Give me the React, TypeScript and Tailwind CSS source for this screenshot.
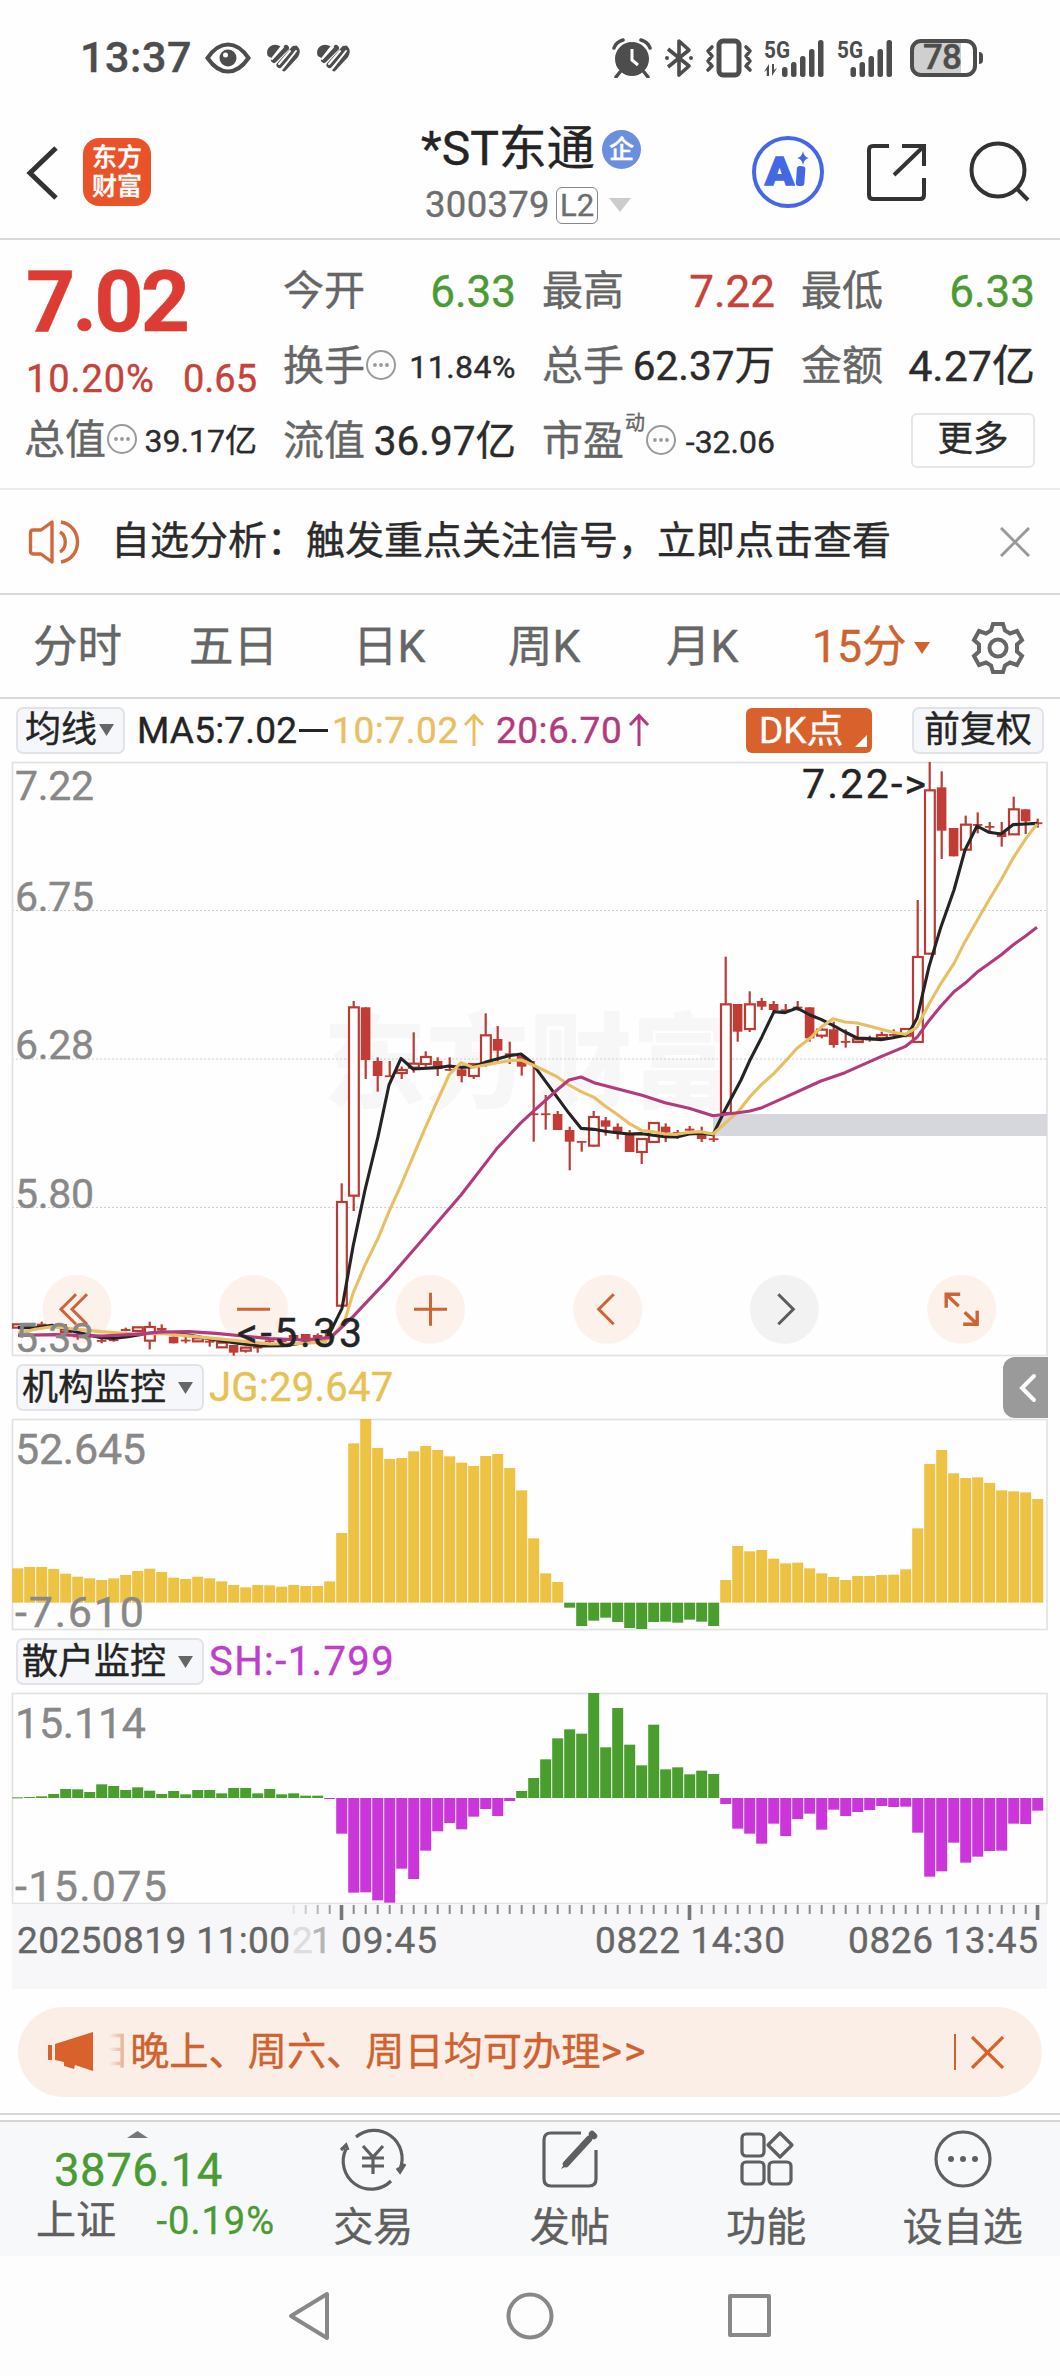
import React from "react";

const PITCH = 12;
const FIRST = 5.7; // centre of the first bar, measured from the panel's left edge
const cx = (i: number) => FIRST + PITCH * i;

/* Candles: index, high, body top, body bottom, low (thirds of a pixel), kind: h = hollow, f = filled */
type Candle = [number, number, number, number, number, "h" | "f"];
const candles: Candle[] = [
  [0, 1723, 1723, 1733, 1733, "h"], [1, 1726, 1726, 1732, 1732, "f"], [2, 1715, 1721, 1728, 1734, "f"],
  [3, 1722, 1726, 1730, 1736, "f"], [4, 1722, 1738, 1746, 1756, "h"], [5, 1745, 1756, 1762, 1769, "f"],
  [6, 1750, 1756, 1762, 1765, "f"], [7, 1760, 1770, 1775, 1780, "f"], [8, 1766, 1768, 1773, 1775, "f"],
  [9, 1733, 1737, 1743, 1744, "f"], [10, 1732, 1732, 1743, 1743, "h"], [11, 1715, 1731, 1772, 1798, "h"],
  [12, 1723, 1734, 1742, 1747, "f"], [13, 1760, 1760, 1780, 1780, "f"], [14, 1760, 1769, 1774, 1780, "f"],
  [15, 1762, 1765, 1774, 1776, "h"], [16, 1766, 1772, 1778, 1790, "f"], [17, 1775, 1778, 1792, 1792, "h"],
  [18, 1785, 1785, 1808, 1817, "f"], [19, 1790, 1793, 1802, 1808, "h"], [20, 1780, 1790, 1794, 1808, "f"],
  [21, 1765, 1771, 1775, 1780, "f"], [22, 1765, 1771, 1775, 1778, "f"], [23, 1755, 1755, 1770, 1775, "f"],
  [24, 1752, 1752, 1768, 1772, "f"], [25, 1750, 1755, 1768, 1772, "f"], [26, 1745, 1750, 1765, 1768, "f"],
  [27, 1300, 1356, 1667, 1667, "h"], [28, 753, 772, 1337, 1383, "h"], [29, 772, 772, 930, 987, "f"],
  [30, 922, 933, 978, 1025, "f"], [31, 933, 976, 980, 980, "f"], [32, 950, 960, 969, 987, "h"],
  [33, 847, 941, 953, 968, "h"], [34, 904, 921, 942, 950, "h"], [35, 922, 933, 957, 978, "f"],
  [36, 922, 957, 961, 963, "f"], [37, 955, 958, 978, 997, "f"], [38, 940, 942, 978, 987, "h"],
  [39, 790, 856, 939, 950, "h"], [40, 828, 867, 902, 935, "f"], [41, 875, 910, 915, 942, "f"],
  [42, 912, 918, 950, 977, "f"], [43, 933, 1090, 1094, 1175, "f"], [44, 1035, 1090, 1094, 1139, "f"],
  [45, 1083, 1092, 1140, 1140, "f"], [46, 1130, 1140, 1175, 1261, "f"], [47, 1175, 1173, 1178, 1205, "f"],
  [48, 1083, 1101, 1187, 1190, "h"], [49, 1101, 1111, 1130, 1157, "f"], [50, 1120, 1130, 1151, 1168, "f"],
  [51, 1140, 1152, 1206, 1206, "f"], [52, 1165, 1167, 1206, 1242, "h"], [53, 1119, 1119, 1176, 1176, "h"],
  [54, 1120, 1130, 1148, 1176, "f"], [55, 1140, 1146, 1150, 1166, "f"], [56, 1128, 1136, 1142, 1155, "f"],
  [57, 1130, 1155, 1167, 1176, "f"], [58, 1155, 1165, 1169, 1176, "f"], [59, 620, 763, 1089, 1089, "h"],
  [60, 762, 762, 845, 875, "f"], [61, 724, 763, 837, 846, "h"], [62, 744, 753, 770, 780, "f"],
  [63, 753, 762, 780, 786, "f"], [64, 762, 778, 783, 787, "f"], [65, 753, 770, 775, 782, "f"],
  [66, 772, 772, 865, 875, "f"], [67, 830, 839, 857, 865, "h"], [68, 815, 838, 885, 893, "f"],
  [69, 838, 873, 877, 893, "f"], [70, 828, 868, 876, 877, "h"], [71, 857, 866, 870, 875, "f"],
  [72, 845, 855, 864, 865, "h"], [73, 838, 852, 857, 862, "f"], [74, 836, 837, 857, 862, "h"],
  [75, 450, 621, 876, 876, "h"], [76, 36, 121, 611, 611, "h"], [77, 64, 112, 242, 327, "f"],
  [78, 234, 234, 319, 319, "f"], [79, 197, 224, 299, 300, "h"], [80, 187, 222, 227, 250, "f"],
  [81, 216, 228, 232, 245, "f"], [82, 216, 247, 261, 290, "f"], [83, 140, 178, 253, 255, "h"],
  [84, 178, 178, 214, 252, "f"], [85, 206, 217, 222, 233, "f"],
];

/* Moving averages: [x in px, y in thirds of a pixel] */
const ma5 = [
  [18, 1733], [35, 1733], [52, 1726], [68, 1740], [85, 1752], [101, 1763], [115, 1765], [128, 1760], [149, 1750], [162, 1748],
  [189, 1755], [216, 1770], [237, 1780], [260, 1788], [284, 1787], [304, 1778], [325, 1775], [333, 1730], [342, 1675], [353, 1490],
  [365, 1320], [378, 1160], [389, 1005], [401, 925], [413, 957], [437, 953], [449, 948], [461, 952], [473, 950], [485, 937],
  [509, 917], [521, 912], [531, 935], [545, 992], [569, 1090], [581, 1135], [594, 1138], [605, 1144], [617, 1148], [629, 1152],
  [642, 1151], [653, 1156], [665, 1160], [677, 1161], [689, 1152], [701, 1150], [713, 1154], [725, 1080], [741, 990], [750, 930],
  [762, 860], [774, 785], [785, 788], [797, 774], [810, 795], [821, 808], [833, 826], [845, 846], [857, 864], [869, 866],
  [881, 869], [893, 863], [905, 856], [909, 848], [917, 805], [929, 650], [941, 530], [954, 420], [965, 300], [977, 228],
  [989, 247], [1001, 252], [1013, 224], [1026, 222], [1037, 220],
];
const ma10 = [
  [18, 1750], [35, 1738], [52, 1730], [71, 1736], [101, 1745], [135, 1752], [162, 1750], [203, 1762], [237, 1772], [270, 1782],
  [304, 1780], [325, 1775], [338, 1740], [345, 1710], [353, 1630], [365, 1545], [378, 1465], [389, 1385], [401, 1305], [413, 1220],
  [425, 1135], [437, 1055], [449, 975], [461, 938], [473, 952], [485, 945], [497, 938], [509, 932], [521, 930], [533, 945],
  [557, 980], [569, 1005], [581, 1025], [594, 1042], [605, 1068], [617, 1093], [629, 1120], [642, 1142], [653, 1145], [665, 1152],
  [677, 1153], [689, 1147], [701, 1145], [713, 1152], [725, 1120], [738, 1085], [750, 1040], [762, 1002], [774, 970], [785, 935],
  [797, 895], [810, 865], [821, 832], [833, 806], [845, 816], [857, 819], [869, 828], [881, 838], [893, 847], [905, 853],
  [917, 832], [929, 762], [941, 700], [954, 640], [965, 575], [977, 512], [989, 450], [1001, 390], [1013, 325], [1026, 265], [1037, 222],
];
const ma20 = [
  [18, 1756], [54, 1754], [101, 1758], [135, 1753], [162, 1746], [189, 1745], [216, 1750], [243, 1758], [270, 1766], [304, 1770],
  [331, 1762], [353, 1700], [389, 1585], [425, 1460], [461, 1335], [497, 1195], [521, 1118], [533, 1085], [557, 1020], [569, 990],
  [581, 981], [594, 998], [617, 1016], [642, 1036], [665, 1058], [689, 1075], [713, 1097], [725, 1093], [738, 1088], [750, 1083],
  [762, 1073], [785, 1042], [810, 1008], [821, 993], [845, 968], [881, 920], [905, 890], [917, 862], [929, 812], [941, 768],
  [954, 725], [965, 700], [977, 667], [1001, 615], [1013, 585], [1026, 557], [1037, 532],
];

/* Histogram ends, thirds of a pixel */
const jg = [
  655, 651, 651, 657, 671, 680, 685, 690, 685, 675, 663, 656, 666, 683, 687, 680, 685, 694, 705, 712, 705, 706, 710, 705, 708, 708, 694,
  549, 280, 207, 294, 327, 324, 304, 288, 300, 319, 338, 348, 318, 312, 354, 421, 565, 670, 696, 773, 828, 812, 803, 816, 834, 837, 816,
  815, 818, 809, 815, 828, 690, 588, 604, 600, 626, 640, 638, 655, 670, 681, 690, 678, 678, 675, 674, 658, 535, 342, 300, 370, 384, 382,
  399, 421, 424, 427, 447,
];
const sh = [
  412, 411, 409, 402, 387, 388, 396, 373, 378, 390, 382, 392, 402, 393, 403, 390, 390, 400, 384, 384, 400, 387, 403, 400, 407, 407, 417,
  521, 698, 697, 721, 728, 626, 657, 572, 514, 489, 508, 470, 447, 468, 423, 393, 354, 298, 235, 208, 221, 99, 262, 144, 254, 316, 194,
  328, 322, 343, 332, 342, 432, 506, 521, 551, 491, 528, 477, 461, 509, 449, 468, 456, 450, 438, 441, 440, 518, 650, 634, 548, 608, 590,
  573, 572, 491, 492, 452,
];

function Histogram({ values, zero, top, up, down }: { values: number[]; zero: number; top: number; up: string; down: string }) {
  return (
    <g>
      {values.map((v, i) => (
        <rect
          key={i}
          x={cx(i) - 5.5}
          width={11}
          y={(Math.min(v, zero) - top) / 3}
          height={Math.max(1, Math.abs(v - zero) / 3)}
          fill={v < zero ? up : down}
        />
      ))}
    </g>
  );
}

function Label({ x, y, w, size = 41, fill = "#888888", children }: { x: number; y: number; w: number; size?: number; fill?: string; children: string }) {
  return (
    <text x={x} y={y} textLength={w} fontSize={size} fill={fill} stroke={fill} strokeWidth="0.4">
      {children}
    </text>
  );
}

const line = (pts: number[][]) => pts.map(([x, y]) => `${x - 12},${(y - 36) / 3}`).join(" ");

function RoundButton({ x, grey, children }: { x: number; grey?: boolean; children: React.ReactNode }) {
  return (
    <g transform={`translate(${x} 547.3)`} fill="none" stroke={grey ? "#5c5c5c" : "#cc6435"} strokeWidth="3">
      <circle r="34.5" fill={grey ? "#f2f2f2" : "#fcf1eb"} stroke="none" />
      {children}
    </g>
  );
}

function PriceChart() {
  return (
    <svg width="1036" height="594" viewBox="0 0 1036 594" className="block overflow-visible">
      <text x="311" y="338" fontSize="103" fontWeight="900" textLength="412" fill="#f7f7f7">东方财富</text>
      {[148.5, 297, 445.5].map((y) => (
        <line key={y} x1="0" x2="1035" y1={y} y2={y} stroke="#d0d0d0" strokeWidth="1" strokeDasharray="2 2" />
      ))}
      <rect x="0.5" y="0.5" width="1034.5" height="593" fill="none" stroke="#e2e2e2" strokeWidth="1.6" />
      <RoundButton x={65}><path d="M-1 -15L-16 0L-1 15M10 -15L-5 0L10 15" /></RoundButton>
      <RoundButton x={241.5}><path d="M-16.5 0H16.5" /></RoundButton>
      <RoundButton x={418.5}><path d="M-16.5 0H16.5M0 -16.5V16.5" /></RoundButton>
      <RoundButton x={595.7}><path d="M6 -15L-9 0L6 15" /></RoundButton>
      <RoundButton x={772.3} grey><path d="M-6 -15L9 0L-6 15" /></RoundButton>
      <RoundButton x={949.7}><path d="M-15.5 -1.5V-15H-1.5M-15 -14.5L-3 -3M3 3L15 14.5M1.5 15H15.5V1.5" strokeWidth="3.4" /></RoundButton>
      <rect x="701" y="352" width="334" height="22" fill="#d6d7dc" />
      <g stroke="#b83c35" strokeWidth="2.2">
        {candles.map(([i, h, t, b, l, k]) => {
          const y = (v: number) => (v - 36) / 3;
          return k === "f" ? (
            <g key={i}>
              <line x1={cx(i)} x2={cx(i)} y1={y(h)} y2={y(l)} />
              <rect x={cx(i) - 4.9} y={y(t)} width="9.6" height={Math.max(1.8, y(b) - y(t))} fill="#c03c35" stroke="none" />
            </g>
          ) : (
            <g key={i}>
              <line x1={cx(i)} x2={cx(i)} y1={y(h)} y2={y(t)} />
              <line x1={cx(i)} x2={cx(i)} y1={y(b)} y2={y(l)} />
              <rect x={cx(i) - 4.7} y={y(t)} width="9.8" height={y(b) - y(t)} fill="#ffffff" />
            </g>
          );
        })}
      </g>
      <Label x={3} y={38} w={79}>7.22</Label>
      <Label x={3} y={149} w={79}>6.75</Label>
      <Label x={3} y={297} w={79}>6.28</Label>
      <Label x={3} y={445.5} w={79}>5.80</Label>
      <g fill="none" strokeWidth="3.1" strokeLinejoin="round">
        <polyline points={line(ma5)} stroke="#242424" />
        <polyline points={line(ma10)} stroke="#e8bf63" />
        <polyline points={line(ma20)} stroke="#b23a7d" />
      </g>
      <Label x={3} y={590} w={79}>5.33</Label>
      <Label x={790} y={35.5} w={124} fill="#242424">{"7.22->"}</Label>
      <Label x={225} y={585} w={125} fill="#242424">{"<-5.33"}</Label>
    </svg>
  );
}

function IndicatorPanel({ values, zero, top, up, down, labels }: {
  values: number[]; zero: number; top: number; up: string; down: string;
  labels: [string, number, number, number][];
}) {
  return (
    <svg width="1036" height="211" viewBox="0 0 1036 211" className="block overflow-visible">
      <rect x="0.5" y="0.5" width="1034.5" height="210" fill="none" stroke="#e2e2e2" strokeWidth="1.6" />
      <Histogram values={values} zero={zero} top={top} up={up} down={down} />
      {labels.map(([t, x, y, w]) => (
        <Label key={t} x={x} y={y} w={w} size={43}>{t}</Label>
      ))}
    </svg>
  );
}

function Axis() {
  return (
    <svg width="1035" height="84" viewBox="0 0 1035 84" className="block bg-[#f7f7fa]">
      {Array.from({ length: 63 }, (_, k) => k + 23).map((i) => {
        const major = i === 27 || i === 56 || i === 85;
        return (
          <rect
            key={i}
            x={cx(i) - (major ? 2 : 1)}
            y="0"
            width={major ? 3.6 : 2}
            height={major ? 15 : 9}
            fill={major ? "#777777" : "#8a8a8a"}
            opacity={i < 27 ? (i - 22) * 0.2 : 1}
          />
        );
      })}
      <Label x={5} y={47.5} w={273} size={37} fill="#666666">20250819 11:00</Label>
      <Label x={280} y={47.5} w={20} size={37} fill="#dddddd">2</Label>
      <Label x={299} y={47.5} w={20} size={37} fill="#b4b4b4">1</Label>
      <Label x={329} y={47.5} w={96} size={37} fill="#666666">09:45</Label>
      <Label x={583} y={47.5} w={190} size={37} fill="#666666">0822 14:30</Label>
      <Label x={836} y={47.5} w={190} size={37} fill="#666666">0826 13:45</Label>
    </svg>
  );
}

function More() {
  return (
    <svg width="32" height="32" viewBox="-16 -16 32 32" className="mb-[4px] shrink-0">
      <circle r="14" fill="none" stroke="#9a9a9a" strokeWidth="2" />
      <circle cx="-6" r="1.9" fill="#999" /><circle r="1.9" fill="#999" /><circle cx="6" r="1.9" fill="#999" />
    </svg>
  );
}

function Down({ w, h, fill }: { w: number; h: number; fill: string }) {
  return (
    <svg width={w} height={h} viewBox="0 0 10 10" preserveAspectRatio="none" className="shrink-0">
      <path d="M0 0H10L5 10Z" fill={fill} />
    </svg>
  );
}

function Signal({ arrows }: { arrows?: boolean }) {
  return (
    <svg width="62" height="40" viewBox="0 0 62 40" fill="#4d4d4d" className="overflow-visible">
      <text x="0" y="19.500" fontSize="23" fontWeight="700" textLength="26" lengthAdjust="spacingAndGlyphs">5G</text>
      {arrows && <path d="M0 34L5 26V38H2.800V32ZM8 26H10V32L13 30L8 38Z" />}
      {[[18, 29, 10], [27, 24, 15], [36, 18, 21], [45, 11, 28], [54, 2, 37]].map(([x, y, h]) => (
        <rect key={x} x={arrows ? x : x - 4.5} y={y} width="5.500" height={h} rx="2.500" />
      ))}
    </svg>
  );
}

function Heart() {
  return (
    <svg width="37" height="31" viewBox="0 0 37 31" fill="none" stroke="#4d4d4d" strokeWidth="7" strokeLinecap="round">
      <path d="M5 13C3 6 9 3 14 5L7 14Z" fill="#4d4d4d" strokeWidth="3" />
      <path d="M10 18L22 6" strokeWidth="6" />
      <path d="M15.500 23L30 7" strokeWidth="6" />
      <path d="M20 27L32 14Q35 9 32 6" strokeWidth="4.500" />
      <path d="M8 17L19 5M15 22L26 9M18 27L32 9" stroke="#fefefe" strokeWidth="2" />
    </svg>
  );
}

function StatusBar() {
  return (
    <div className="flex h-[115px] items-center pr-[77px] pl-[80px] text-[#4d4d4d]">
      <span className="w-[125px] text-[43px] leading-none font-medium tracking-[0.6px]">13:37</span>
      <svg width="46" height="32" viewBox="0 0 46 32" fill="none" stroke="#4d4d4d" strokeWidth="4">
        <path d="M2.500 16C9 6.500 16 2.500 23 2.500S37 6.500 43.500 16C37 25.500 30 29.500 23 29.500S9 25.500 2.500 16Z" />
        <circle cx="23" cy="16" r="8.500" fill="#4d4d4d" stroke="none" />
        <circle cx="20.500" cy="13" r="2.500" fill="#fff" stroke="none" />
      </svg>
      <div className="ml-[13px] flex gap-[13px]"><Heart /><Heart /></div>
      <svg className="ml-auto" width="40" height="40" viewBox="0 0 40 40">
        <circle cx="20" cy="21" r="17" fill="#4d4d4d" />
        <path d="M20 11V22L26 27" fill="none" stroke="#fff" strokeWidth="3" />
        <path d="M2 10Q4 4 11 2M38 10Q36 4 29 2M8 34L4 39M32 34L36 39" fill="none" stroke="#4d4d4d" strokeWidth="3.500" strokeLinecap="round" />
      </svg>
      <svg className="ml-[11px]" width="32" height="40" viewBox="0 0 32 40" fill="none" stroke="#4d4d4d" strokeWidth="3.600" strokeLinejoin="round">
        <path d="M5 11L26 28L16 37V3L26 12L5 29" />
        <circle cx="4" cy="20" r="2" fill="#4d4d4d" stroke="none" /><circle cx="28" cy="20" r="2" fill="#4d4d4d" stroke="none" />
      </svg>
      <svg className="ml-[10px]" width="48" height="40" viewBox="0 0 48 40" fill="none" stroke="#4d4d4d" strokeWidth="3.600" strokeLinecap="round" strokeLinejoin="round">
        <rect x="14" y="3" width="20" height="34" rx="4" strokeWidth="5" />
        <path d="M7 9L3 13L7 18L3 23L7 28L3 32M41 9L45 13L41 18L45 23L41 28L45 32" />
      </svg>
      <div className="ml-[11px] flex gap-[11px]"><Signal arrows /><Signal /></div>
      <div className="ml-[11px] flex items-center gap-[2px]">
        <div className="flex h-[38px] w-[67px] items-center rounded-[11px] border-4 border-[#4d4d4d] bg-[linear-gradient(90deg,#cfcfcf_80%,#fff_80%)]">
          <span className="w-[53px] pl-[3px] text-center text-[35px] leading-none font-medium tracking-[-1px]">78</span>
        </div>
        <div className="h-[12px] w-[4px] rounded-r bg-[#4d4d4d]" />
      </div>
    </div>
  );
}

function Header() {
  return (
    <div className="flex h-[125px] items-start border-b-2 border-[#d9d9d9]">
      <svg className="mt-[29px] ml-[25px]" width="36" height="58" viewBox="0 0 36 58">
        <path d="M31 4L5 29L31 54" fill="none" stroke="#333" strokeWidth="5" />
      </svg>
      <div className="mt-[23px] ml-[22px] flex h-[68px] w-[68px] flex-col items-center justify-center gap-[3px] rounded-[16px] bg-[#ea5329] text-[25px] leading-[26px] font-medium text-white">
        <span>东方</span>
        <span>财富</span>
      </div>
      <div className="mt-[8px] ml-[270px] w-[230px]">
        <div className="flex items-center">
          <span className="w-[181px] text-[48px] leading-[52px] whitespace-nowrap text-[#242424]">*ST东通</span>
          <span className="flex h-[39px] w-[39px] shrink-0 items-center justify-center rounded-full bg-[#6a8fdf] text-[25px] leading-none font-medium text-white">企</span>
        </div>
        <div className="mt-[11px] flex items-center pl-[4px]">
          <span className="w-[131px] text-[36.500px] leading-[38px] tracking-[0.3px] text-[#6e6e6e]">300379</span>
          <span className="flex h-[37px] w-[42px] items-center justify-center rounded-[6px] border-[1.5px] border-[#888] text-[31px] leading-none text-[#6e6e6e]">L2</span>
          <span className="ml-[11px] flex"><Down w={22} h={14} fill="#cccccc" /></span>
        </div>
      </div>
      <svg className="mt-[19px] ml-[99px]" width="76" height="76" viewBox="0 0 76 76">
        <circle cx="38" cy="38" r="34" fill="none" stroke="#4468e4" strokeWidth="4" />
        <text x="15" y="51" fontSize="39" fontWeight="900" fill="#4468e4" stroke="#4468e4" strokeWidth="1.500" textLength="29" lengthAdjust="spacingAndGlyphs">A</text>
        <rect x="46.500" y="32" width="8.500" height="20" rx="3" fill="#4468e4" transform="rotate(4 50 40)" />
        <path d="M53 17Q54 23 59 24Q54 25 53 31Q52 25 47 24Q52 23 53 17Z" fill="#4468e4" />
      </svg>
      <svg className="mt-[26px] ml-[39px]" width="62" height="62" viewBox="0 0 62 62" fill="none" stroke="#333" strokeWidth="4">
        <path d="M24 5H8Q4 5 4 9V54Q4 58 8 58H55Q59 58 59 54V37M37 5H59V25M58 6L29 34" />
      </svg>
      <svg className="mt-[25px] ml-[41px]" width="64" height="64" viewBox="0 0 64 64" fill="none" stroke="#333" strokeWidth="4">
        <circle cx="30" cy="30" r="26.500" /><path d="M48 48L60 60" />
      </svg>
    </div>
  );
}

function Cell({ label, info, sup, value, cls }: { label: string; info?: boolean; sup?: string; value: string; cls: string }) {
  return (
    <div className="flex h-[75px] items-center whitespace-nowrap">
      <span className="text-[41px] leading-none text-[#666]">{label}</span>
      {sup && <span className="mb-[38px] ml-[1px] w-[20px] text-[20px] leading-none text-[#666]">{sup}</span>}
      {info && <More />}
      <span className={`ml-auto leading-none ${cls}`}>{value}</span>
    </div>
  );
}

function Quote() {
  return (
    <div className="flex h-[250px] gap-[26px] border-b-2 border-[#ebebeb] pt-[14px] pr-[25px] pl-[24px]">
      <div className="w-[233px]">
        <div className="h-[101px] pt-[4px] pl-[2px] text-[86px] leading-[88px] font-bold tracking-[-3px] text-[#dc3c33]">7.02</div>
        <div className="flex h-[48px] items-center justify-between pl-[2px] text-[38px] leading-none text-[#c6423a]">
          <span className="tracking-[0.9px]">10.20%</span>
          <span>0.65</span>
        </div>
        <Cell label="总值" info value="39.17亿" cls="text-[32px] text-[#2b2b2b]" />
      </div>
      <div className="w-[233px]">
        <Cell label="今开" value="6.33" cls="text-[44px] text-[#4b9b35]" />
        <Cell label="换手" info value="11.84%" cls="text-[32px] tracking-[0.5px] text-[#2b2b2b]" />
        <Cell label="流值" value="36.97亿" cls="text-[40.500px] text-[#2b2b2b]" />
      </div>
      <div className="w-[233px]">
        <Cell label="最高" value="7.22" cls="text-[44px] text-[#c6423a]" />
        <Cell label="总手" value="62.37万" cls="text-[40.500px] text-[#2b2b2b]" />
        <Cell label="市盈" sup="动" info value="-32.06" cls="text-[32px] text-[#2b2b2b]" />
      </div>
      <div className="w-[234px]">
        <Cell label="最低" value="6.33" cls="text-[44px] text-[#4b9b35]" />
        <Cell label="金额" value="4.27亿" cls="text-[43px] text-[#2b2b2b]" />
        <div className="flex h-[73px] items-center justify-end">
          <span className="flex h-[55px] w-[124px] items-center justify-center rounded-[6px] border-2 border-[#e6e6e6] pb-[2px] text-[35.500px] leading-none text-[#2b2b2b]">更多</span>
        </div>
      </div>
    </div>
  );
}

function Notice() {
  return (
    <div className="flex h-[105px] items-center border-b-2 border-[#d9d9d9] pr-[30px] pl-[28px]">
      <svg width="54" height="46" viewBox="0 0 54 46" fill="none" stroke="#cf6a3c" strokeWidth="3.400" strokeLinejoin="round">
        <path d="M24 3V43L13 35H5Q2.500 35 2.500 32V14Q2.500 11 5 11H13Z" />
        <path d="M32 13C39 17 39 29 32 33M33 3C55 7 55 39 33 43" />
      </svg>
      <span className="ml-[29px] text-[39px] leading-none whitespace-nowrap text-[#2b2b2b]">自选分析：触发重点关注信号，立即点击查看</span>
      <svg className="ml-auto" width="30" height="30" viewBox="0 0 30 30"><path d="M1 1L29 29M29 1L1 29" stroke="#999" strokeWidth="3" /></svg>
    </div>
  );
}

function Tabs() {
  return (
    <div className="flex h-[104px] items-center border-b-2 border-[#d9d9d9] pt-[3px] pl-[33px] text-[44.500px] leading-none whitespace-nowrap text-[#666]">
      <span className="w-[156px]">分时</span>
      <span className="w-[164px]">五日</span>
      <span className="w-[155px]">日K</span>
      <span className="w-[158px]">周K</span>
      <span className="w-[146px]">月K</span>
      <span className="w-[102px] text-[#cf632f]">15分</span>
      <Down w={16} h={12} fill="#cf632f" />
      <svg className="ml-[41px]" width="54" height="54" viewBox="-27 -27 54 54" fill="none" stroke="#666" strokeWidth="4" strokeLinejoin="miter">
        <path d="M-5 -24H5L7 -17.500L12 -14.500L19 -17L24 -8L19 -3.500V3.500L24 8L19 17L12 14.500L7 17.500L5 24H-5L-7 17.500L-12 14.500L-19 17L-24 8L-19 3.500V-3.500L-24 -8L-19 -17L-12 -14.500L-7 -17.500Z" />
        <circle r="8.500" />
      </svg>
    </div>
  );
}

function Up({ color }: { color: string }) {
  return (
    <svg width="22" height="34" viewBox="0 0 22 34" fill="none" stroke={color} strokeWidth="3">
      <path d="M11 33V3M2 12L11 2.500L20 12" />
    </svg>
  );
}

const chip = "flex h-[47px] items-center rounded-[7px] border-2 border-[#e2e3e8] bg-[#f6f7fa] text-[36px] leading-none text-[#242424] whitespace-nowrap";

function MaBar() {
  return (
    <div className="flex h-[62px] items-center pl-[16px] text-[37px] leading-none">
      <div className={`${chip} w-[109px] gap-[2px] pl-[7px]`}>
        均线
        <Down w={15} h={12} fill="#666666" />
      </div>
      <span className="ml-[12px] w-[162px] tracking-[0.2px] text-[#242424]">MA5:7.02</span>
      <span className="h-[3px] w-[29px] bg-[#242424]" />
      <span className="ml-[4px] w-[131px] tracking-[0.6px] text-[#e8bf63]">10:7.02</span>
      <Up color="#e8bf63" />
      <span className="ml-[11px] w-[132px] tracking-[0.5px] text-[#b23a7d]">20:6.70</span>
      <Up color="#b23a7d" />
      <div className="relative ml-[96px] flex h-[45px] w-[126px] items-center rounded-[6px] bg-[#d9612b] pl-[13px] text-[37px] whitespace-nowrap text-white">
        DK点
        <svg className="absolute right-[5px] bottom-[6px]" width="12" height="12" viewBox="0 0 12 12"><path d="M12 0V12H0Z" fill="#fff" /></svg>
      </div>
      <div className={`${chip} ml-[40px] w-[132px] justify-center`}>前复权</div>
    </div>
  );
}

function IndicatorBar({ name, value, color }: { name: string; value: string; color: string }) {
  return (
    <div className="flex h-[63px] items-center pl-[16px]">
      <div className={`${chip} w-[188px] gap-[12px] pl-[4px]`}>
        {name}
        <Down w={15} h={12} fill="#666666" />
      </div>
      <span className={`ml-[5px] text-[40px] leading-none ${color}`}>{value}</span>
    </div>
  );
}

function Promo() {
  return (
    <div className="mx-[18px] mt-[18px] flex h-[90px] items-center rounded-full bg-[#fbeee6] pl-[29px] text-[39.200px] leading-none whitespace-nowrap text-[#cf632f]">
      <svg width="48" height="40" viewBox="0 0 48 40" fill="#d9612b">
        <path d="M1 13H5V28H1ZM8 12L46 0V39L28 33L27 37L17 34V30L8 28Z" />
      </svg>
      <span className="-ml-[4px] [mask-image:linear-gradient(90deg,transparent_45%,rgba(0,0,0,0.5)_90%)]">日</span>
      <span>晚上、周六、周日均可办理<span className="text-[41px] tracking-[2px]">&gt;&gt;</span></span>
      <span className="ml-auto h-[36px] w-[2px] bg-[#cf632f]" />
      <svg className="mr-[37px] ml-[14px]" width="35" height="33" viewBox="0 0 35 33"><path d="M2 1L33 32M33 1L2 32" stroke="#d9612b" strokeWidth="3.200" /></svg>
    </div>
  );
}

function Item({ label, children }: { label: string; children: React.ReactNode }) {
  return (
    <div className="flex w-[196.500px] flex-col items-center">
      <svg width="64" height="60" viewBox="-32 -30 64 60" fill="none" stroke="#5f5f5f" strokeWidth="3.200" className="mt-[7px] overflow-visible">{children}</svg>
      <span className="mt-[19px] text-[40px] leading-[40px] text-[#5f5f5f]">{label}</span>
    </div>
  );
}

function Footer() {
  return (
    <div className="mt-[16px] border-t-2 border-[#d6d6d6] pt-[5px]">
      <div className="flex h-[136px] border-t-2 border-[#d6d6d6] bg-[#f7f8fa]">
        <div className="w-[275px] shrink-0">
          <svg className="mt-[9px] ml-[127px]" width="21" height="7" viewBox="0 0 21 7"><path d="M0 7L10.500 0L21 7Z" fill="#777" /></svg>
          <div className="mt-[9px] pl-[54px] text-[45.500px] leading-[48px] tracking-[0.5px] text-[#4b9b35]">3876.14</div>
          <div className="mt-[6px] flex items-center justify-between pl-[36px] leading-[40px]">
            <span className="text-[40px] text-[#5f5f5f]">上证</span>
            <span className="text-[38px] tracking-[1px] text-[#4b9b35]">-0.19%</span>
          </div>
        </div>
        <div className="flex">
          <Item label="交易">
            <path d="M-17 -22A28 28 0 0 1 27 10M18 22A28 28 0 0 1 -27 -10M32 5L27 13L24 9M-32 -9L-27 -14L-25 -9" />
            <path d="M-10 -13L0 -2L10 -13M0 -2V15M-11 -1H11M-11 7H11" />
          </Item>
          <Item label="发帖">
            <path d="M11 -26H-19Q-26 -26 -26 -19V20Q-26 27 -19 27H19Q26 27 26 20V-9" />
            <path d="M19 -20L-4 5M22 -25L24 -23" strokeWidth="6.500" strokeLinecap="round" /><path d="M-4 2L-9 10L-1 6Z" fill="#5f5f5f" stroke="none" />
          </Item>
          <Item label="功能">
            <rect x="-24" y="-25" width="22" height="22" rx="4" /><rect x="-24" y="3" width="22" height="22" rx="4" /><rect x="3" y="3" width="22" height="22" rx="4" />
            <path d="M14 -26L26 -14L14 -2L2 -14Z" strokeLinejoin="round" />
          </Item>
          <Item label="设自选">
            <circle r="27" />
            <g fill="#5f5f5f" stroke="none"><circle cx="-12" r="3" /><circle r="3" /><circle cx="12" r="3" /></g>
          </Item>
        </div>
      </div>
    </div>
  );
}

function NavBar() {
  return (
    <div className="flex h-[120px] items-center bg-[#fdfdfd] pl-[286px]">
      <svg width="46" height="52" viewBox="0 0 46 52" fill="none" stroke="#888" strokeWidth="4" strokeLinejoin="round"><path d="M41 4V48L5 26Z" /></svg>
      <svg className="ml-[172px]" width="52" height="52" viewBox="-26 -26 52 52" fill="none" stroke="#888" strokeWidth="4"><circle r="21.500" /></svg>
      <svg className="ml-[170px]" width="48" height="48" viewBox="0 0 48 48" fill="none" stroke="#888" strokeWidth="4" strokeLinejoin="round"><rect x="4" y="4" width="39" height="39" /></svg>
    </div>
  );
}

export default function App() {
  return (
    <div className="h-[2376px] w-[1060px] overflow-hidden bg-[#fefefe] font-['Roboto','Noto_Sans_CJK_SC',sans-serif] [-webkit-text-stroke:0.4px]">
      <StatusBar />
      <Header />
      <Quote />
      <Notice />
      <Tabs />
      <div className="h-[63px]"><MaBar /></div>
      <div className="h-[594px] pl-[12px]"><PriceChart /></div>
      <div className="relative">
        <IndicatorBar name="机构监控" value="JG:29.647" color="text-[#e6c254] tracking-[0.3px]" />
        <div className="absolute top-[1px] right-[12px] flex h-[61px] w-[45px] items-center justify-end rounded-l-[12px] bg-[#9a9a9a] pr-[11px]">
          <svg width="20" height="30" viewBox="0 0 20 30"><path d="M17 3L5 15L17 27" fill="none" stroke="#fff" strokeWidth="4" strokeLinecap="round" /></svg>
        </div>
      </div>
      <div className="h-[211px] pl-[12px]">
        <IndicatorPanel values={jg} zero={758} top={207} up="#eec344" down="#4a9e2e" labels={[["52.645", 3, 44.7, 131], ["-7.610", 3, 207.7, 129]]} />
      </div>
      <IndicatorBar name="散户监控" value="SH:-1.799" color="text-[#bd3fca] tracking-[1.4px]" />
      <div className="h-[212px] pl-[12px]">
        <IndicatorPanel values={sh} zero={414} top={99} up="#4a9e2e" down="#ca36d9" labels={[["15.114", 3, 45, 131], ["-15.075", 3, 207.7, 152]]} />
      </div>
      <div className="pl-[12px]"><Axis /></div>
      <Promo />
      <Footer />
      <NavBar />
    </div>
  );
}
